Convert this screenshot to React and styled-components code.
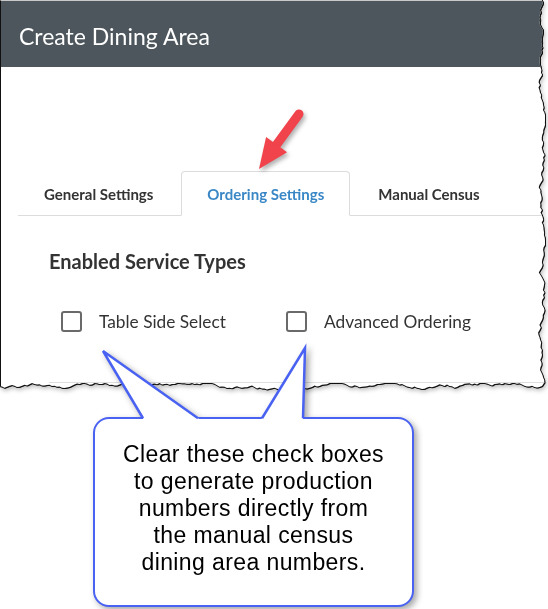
import styled, { createGlobalStyle } from 'styled-components';

const GlobalStyle = createGlobalStyle`
  html, body {
    margin: 0;
    padding: 0;
    background: #fff;
  }
  body {
    width: 548px;
    height: 609px;
    overflow: hidden;
    font-family: Lato, "Open Sans", sans-serif;
  }
`;

const PANEL_W = 546;
const PANEL_H = 391;

// Ragged right and bottom edge of the cropped dialog
const tornEdge = (w, h) => {
  let seed = 11;
  const rnd = () => {
    seed = (seed * 9301 + 49297) % 233280;
    return seed / 233280;
  };
  const pts = ['0px 0px'];
  let x = w - 5;
  for (let y = 0; y < h - 7; y += 2.5) {
    x = Math.min(w - 1, Math.max(w - 9, x + (rnd() - 0.5) * 3.5));
    pts.push(`${x.toFixed(1)}px ${y}px`);
  }
  let y = h - 4;
  for (let bx = w - 4; bx > 0; bx -= 2.5) {
    y = Math.min(h - 1, Math.max(h - 8, y + (rnd() - 0.5) * 3));
    pts.push(`${bx}px ${y.toFixed(1)}px`);
  }
  pts.push(`0px ${h - 5}px`);
  return `polygon(${pts.join(',')})`;
};

const Page = styled.div`
  width: 548px;
  height: 609px;
  position: relative;
`;

const PanelFrame = styled.div`
  width: ${PANEL_W}px;
  filter: drop-shadow(1px 0 0 #111) drop-shadow(0 1px 0 #111)
    drop-shadow(1px 2px 2px rgba(0, 0, 0, 0.25));
`;

const Panel = styled.div`
  position: relative;
  box-sizing: border-box;
  width: ${PANEL_W}px;
  height: ${PANEL_H}px;
  background: #fff;
  border-left: 1px solid #111;
  border-top: 1px solid #c9c9c9;
  clip-path: ${(p) => p.$edge};
`;

const TitleBar = styled.div`
  box-sizing: border-box;
  height: 66px;
  padding: 22px 0 0 18px;
  background: #4c565c;
`;

const Title = styled.h1`
  margin: 0;
  font-weight: 400;
  font-size: 23px;
  line-height: 27px;
  color: #fff;
`;

const Body = styled.div`
  padding-top: 104px;
`;

const TabStrip = styled.div`
  display: flex;
  margin-left: 17px;
  border-bottom: 1px solid #dcdcdc;
`;

const Tab = styled.div`
  box-sizing: border-box;
  height: 45px;
  margin: 0 2px -1px 0;
  padding: 0 25px;
  display: flex;
  align-items: center;
  font-size: 15px;
  font-weight: 700;
  color: ${(p) => (p.$active ? '#3a87c6' : '#333')};
  background: ${(p) => (p.$active ? '#fff' : 'transparent')};
  border: 1px solid ${(p) => (p.$active ? '#dcdcdc' : 'transparent')};
  border-bottom-color: ${(p) => (p.$active ? '#fff' : 'transparent')};
  border-radius: 4px 4px 0 0;
`;

const Section = styled.div`
  padding-left: 48px;
`;

const SectionTitle = styled.h2`
  margin: 33px 0 0;
  font-size: 20px;
  line-height: 24px;
  font-weight: 700;
  color: #333;
`;

const OptionRow = styled.div`
  display: grid;
  grid-template-columns: 225px auto;
  margin: 38px 0 0 12px;
`;

const Option = styled.label`
  display: flex;
  align-items: center;
  gap: 17px;
  font-size: 17.3px;
  line-height: 21px;
  color: #333;
`;

const Box = styled.span`
  box-sizing: border-box;
  width: 21px;
  height: 21px;
  border: 2px solid #6a6a6a;
  border-radius: 3px;
  background: #fff;
`;

const Divider = styled.div`
  margin: 50px 0 0 48px;
  border-top: 1px solid #dedede;
`;

const ArrowMark = styled.svg`
  position: absolute;
  left: 250px;
  top: 100px;
  overflow: visible;
  filter: drop-shadow(2px 3px 2px rgba(0, 0, 0, 0.3));
`;

const Callout = styled.div`
  position: relative;
  box-sizing: border-box;
  width: 321px;
  height: 190px;
  margin: 26px 0 0 93px;
  padding-top: 21.5px;
  background: #fff;
  border: 2.5px solid #4a62f2;
  border-radius: 16px;
  filter: drop-shadow(3px 3px 3px rgba(0, 0, 0, 0.35));
`;

const Pointers = styled.svg`
  position: absolute;
  left: -2.5px;
  top: -74.5px;
  overflow: visible;
`;

const CalloutText = styled.p`
  position: relative;
  margin: 0;
  font-family: "Liberation Sans", Arial, sans-serif;
  font-size: 23px;
  line-height: 27px;
  letter-spacing: 0.4px;
  text-align: center;
  color: #000;
`;

const tails = [
  { tip: [10, 6], a: [50, 73.25], b: [105, 73.25] },
  { tip: [212, 3], a: [169, 73.25], b: [210, 73.25] },
];

// push a base point a little further along its side so the fill hides the border
const extend = (tip, p, by) => {
  const dx = p[0] - tip[0];
  const dy = p[1] - tip[1];
  const k = (dy + by) / dy;
  return [tip[0] + dx * k, tip[1] + dy * k];
};

export default function App() {
  return (
    <Page>
      <GlobalStyle />
      <PanelFrame>
        <Panel $edge={tornEdge(PANEL_W, PANEL_H)}>
          <TitleBar>
            <Title>Create Dining Area</Title>
          </TitleBar>
          <Body>
            <TabStrip>
              <Tab>General Settings</Tab>
              <Tab $active>Ordering Settings</Tab>
              <Tab>Manual Census</Tab>
            </TabStrip>
            <Section>
              <SectionTitle>Enabled Service Types</SectionTitle>
              <OptionRow>
                <Option>
                  <Box />
                  Table Side Select
                </Option>
                <Option>
                  <Box />
                  Advanced Ordering
                </Option>
              </OptionRow>
            </Section>
            <Divider />
          </Body>
          <ArrowMark width="60" height="80" viewBox="0 0 60 80">
            <line x1="48" y1="13" x2="23.5" y2="46.5" stroke="#f1434b" strokeWidth="9" strokeLinecap="round" />
            <polygon points="8,68 36.1,51.3 15.1,36.1" fill="#f1434b" />
          </ArrowMark>
        </Panel>
      </PanelFrame>

      <Callout>
        <Pointers width="220" height="80">
          {tails.map(({ tip, a, b }, i) => {
            const a2 = extend(tip, a, 3);
            const b2 = extend(tip, b, 3);
            return (
              <g key={i}>
                <polygon points={`${tip} ${a2} ${b2}`} fill="#fff" />
                <polyline
                  points={`${a} ${tip} ${b}`}
                  fill="none"
                  stroke="#4a62f2"
                  strokeWidth="2.5"
                  strokeLinejoin="miter"
                />
              </g>
            );
          })}
        </Pointers>
        <CalloutText>
          Clear these check boxes
          <br />
          to generate production
          <br />
          numbers directly from
          <br />
          the manual census
          <br />
          dining area numbers.
        </CalloutText>
      </Callout>
    </Page>
  );
}
